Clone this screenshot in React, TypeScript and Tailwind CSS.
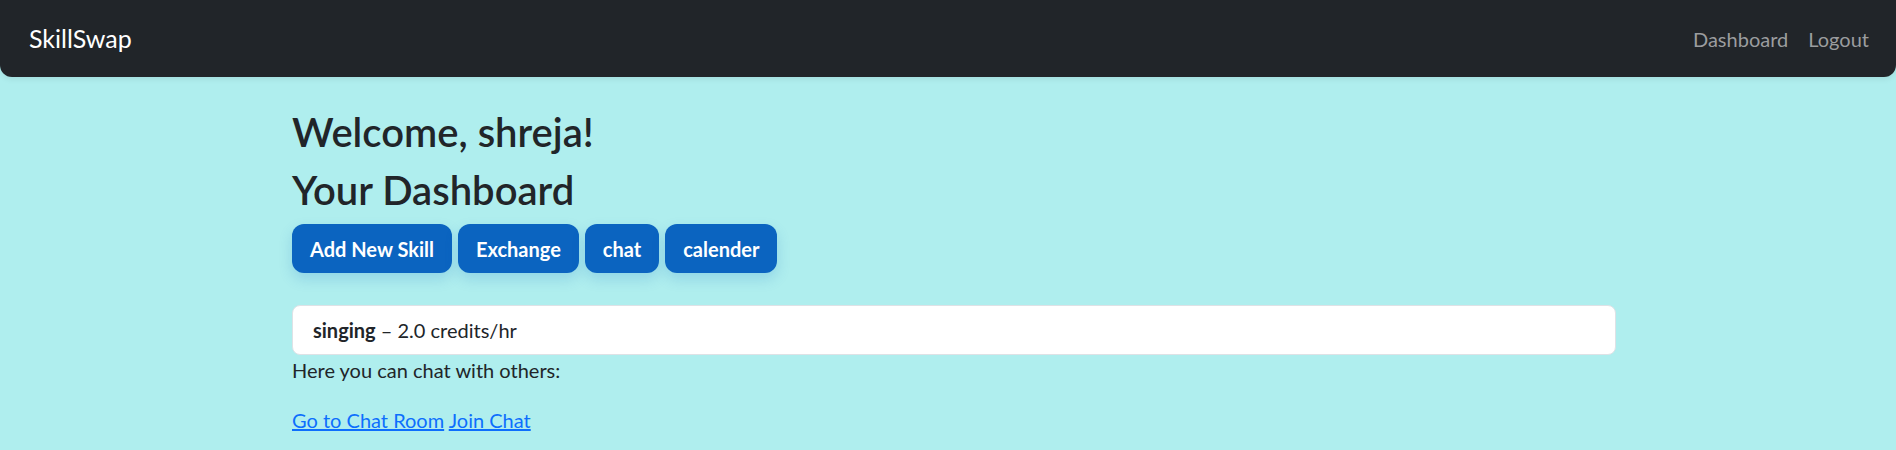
import React from "react";

// Simple dashboard page: dark navbar + welcome header, action buttons, skill list and chat links
const skills = [{ name: "singing", rate: "2.0" }];

const actions = ["Add New Skill", "Exchange", "chat", "calender"];

export default function App() {
  return (
    <div className="min-h-screen bg-[#afeeee] font-['Segoe_UI','Lato',sans-serif] text-[#212529]">
      {/* Navbar */}
      <nav className="h-[77px] bg-[#212529] rounded-b-[12px] flex items-center justify-between pl-[29px] pr-[17px] shadow-[0_2px_6px_rgba(0,0,0,0.08)]">
        <a href="#" className="text-white text-[25px] leading-none">
          SkillSwap
        </a>
        <div className="flex items-center">
          <a href="#" className="px-[10px] text-[20px] text-[#9b9d9f]">
            Dashboard
          </a>
          <a href="#" className="px-[10px] text-[20px] text-[#9b9d9f]">
            Logout
          </a>
        </div>
      </nav>

      {/* Main content */}
      <main className="ml-[292px] w-[1324px] pt-[31px]">
        <h2 className="text-[40px] leading-[48px] font-semibold mb-[10px]">Welcome, shreja!</h2>
        <h2 className="text-[40px] leading-[48px] font-semibold mb-[10px]">Your Dashboard</h2>

        <div className="flex gap-[6px]">
          {actions.map((label) => (
            <button
              key={label}
              className="h-[49px] px-[18px] rounded-[12px] bg-[#0b64c0] text-white text-[20px] font-bold shadow-[0_6px_14px_rgba(11,100,192,0.18)]"
            >
              {label}
            </button>
          ))}
        </div>

        {/* Skills list */}
        <ul className="mt-[32px]">
          {skills.map((s) => (
            <li
              key={s.name}
              className="h-[50px] bg-white border border-[#dee2e6] rounded-[8px] px-[20px] flex items-center text-[20px]"
            >
              <strong className="font-bold">{s.name}</strong>
              <span>&nbsp;– {s.rate} credits/hr</span>
            </li>
          ))}
        </ul>

        <p className="text-[20px] leading-[30px] mb-[20px]">Here you can chat with others:</p>
        <div className="text-[20px] leading-[30px]">
          <a href="#" className="text-[#0d6efd] underline">
            Go to Chat Room
          </a>{" "}
          <a href="#" className="text-[#0d6efd] underline">
            Join Chat
          </a>
        </div>
      </main>
    </div>
  );
}
